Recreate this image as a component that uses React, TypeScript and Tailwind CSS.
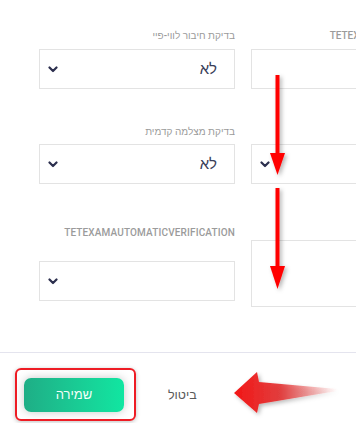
import React from "react";

const label = "h-[11px] text-[10px] leading-[11px] font-medium text-[#9b9b9b] text-right whitespace-nowrap";
const box = "h-[40px] border border-[#e3e3e3] bg-white flex items-center";

function Chevron() {
  return (
    <svg width="10" height="7" viewBox="0 0 10 7" className="shrink-0">
      <path d="M1.5 1.5 L5 5 L8.5 1.5" fill="none" stroke="#2c2f4e" strokeWidth="2.2" strokeLinecap="round" strokeLinejoin="round" />
    </svg>
  );
}

function SelectBox({ value }: { value?: string }) {
  return (
    <div className={`${box} justify-between pl-[8px] pr-[17px]`}>
      <Chevron />
      <span className="text-[15px] text-[#3a3e58]" dir="rtl">
        {value}
      </span>
    </div>
  );
}

function Annotations() {
  return (
    <>
      <div className="absolute left-[15px] top-[368px] w-[121px] h-[53px] border-2 border-[#ee1c24] rounded-[6px] shadow-[0_1px_4px_rgba(0,0,0,0.25)]" />
      <svg className="absolute inset-0 pointer-events-none" width="356" height="423" viewBox="0 0 356 423">
        <defs>
          <filter id="sh" x="-50%" y="-50%" width="200%" height="200%">
            <feDropShadow dx="2" dy="2" stdDeviation="2" floodColor="#000" floodOpacity="0.3" />
          </filter>
          <linearGradient id="tail" x1="0" y1="0" x2="1" y2="0">
            <stop offset="0" stopColor="#f21414" />
            <stop offset="0.45" stopColor="#e23030" stopOpacity="0.9" />
            <stop offset="1" stopColor="#e85050" stopOpacity="0" />
          </linearGradient>
        </defs>
        <g filter="url(#sh)" fill="#ff0000">
          <rect x="275.5" y="75" width="4" height="80" />
          <polygon points="270,153 285,153 277.5,175" />
          <rect x="275.5" y="188" width="4" height="80" />
          <polygon points="270,266 285,266 277.5,289" />
        </g>
        <g filter="url(#sh)">
          <polygon points="234,393 257,372 259,382 337,389 337,391 259,404 257,413" fill="url(#tail)" />
        </g>
      </svg>
    </>
  );
}

export default function App() {
  return (
    <div
      className="relative w-[356px] h-[423px] overflow-hidden bg-white"
      style={{ fontFamily: "Roboto, 'Liberation Sans', 'DejaVu Sans', sans-serif" }}
    >
      <div className="flex gap-[16px] pl-[39px]">
        {/* left column */}
        <div className="w-[196px] shrink-0 flex flex-col">
          <div className={`${label} mt-[30px]`} dir="rtl">בדיקת חיבור לווי-פיי</div>
          <div className="mt-[8px]">
            <SelectBox value="לא" />
          </div>
          <div className={`${label} mt-[37px]`} dir="rtl">בדיקת מצלמה קדמית</div>
          <div className="mt-[7px]">
            <SelectBox value="לא" />
          </div>
          <div className={`${label} mt-[43px] tracking-[0.15px]`}>TETEXAMAUTOMATICVERIFICATION</div>
          <div className="mt-[23px]">
            <SelectBox />
          </div>
        </div>
        {/* right column, cut off by the window */}
        <div className="w-[196px] shrink-0 flex flex-col">
          <div className={`${label} mt-[30px]`}>TETEXAMBACKCAMERAS</div>
          <div className={`${box} mt-[8px]`} />
          <div className="h-[11px] mt-[37px]" />
          <div className="mt-[7px]">
            <SelectBox />
          </div>
          <div className={`${box} mt-[56px] h-[67px]`} />
        </div>
      </div>

      <div className="mt-[45px] border-t border-[#e4e4ee] flex items-center pl-[24px] pt-[25px]">
        <button className="w-[100px] h-[34px] rounded-[7px] bg-gradient-to-r from-[#1eae86] to-[#10e6a1] text-[#f4fff9] text-[13px] shadow-[0_0_10px_rgba(0,0,0,0.22)]">
          שמירה
        </button>
        <span className="ml-[44px] text-[12.5px] text-[#5a5a5a]">ביטול</span>
      </div>

      <Annotations />
    </div>
  );
}
